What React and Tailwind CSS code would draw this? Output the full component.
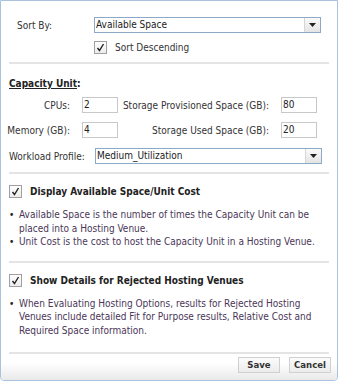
import React from 'react';

const Check = () => (
  <span className="flex h-[13px] w-[13px] shrink-0 items-center justify-center border border-[#a0a0a0] bg-gradient-to-b from-white to-[#ececec]">
    <svg width="9" height="9" viewBox="0 0 9 9">
      <path d="M1.5 5 L3.5 7.5 L7.5 1" fill="none" stroke="#222" strokeWidth="1.4" />
    </svg>
  </span>
);

const Select = ({ value, className }) => (
  <div className={`flex h-[16px] items-stretch border border-[#8ea9c8] bg-white ${className}`}>
    <span className="flex-1 pl-[1px] leading-[14px] text-[#222]">{value}</span>
    <span className="flex w-[16px] items-center justify-center border-l border-[#d6d6d6] bg-gradient-to-b from-[#fafafa] to-[#e4e4e4]">
      <svg width="7" height="4" viewBox="0 0 7 4">
        <path d="M0 0 H7 L3.5 4 Z" fill="#222" />
      </svg>
    </span>
  </div>
);

const Input = ({ value }) => (
  <div className="h-[16px] w-[36px] shrink-0 border border-[#c8c8c8] bg-white pl-[1px] leading-[14px] text-[#222]">
    {value}
  </div>
);

const Sep = ({ className }) => <div className={`mx-[8px] h-[2px] bg-[#e4e4e4] ${className}`} />;

const Bullet = ({ children, className }) => (
  <div className={`flex pl-[8px] pr-[8px] leading-[13.5px] text-[#4a3658] ${className}`}>
    <span className="w-[10px] shrink-0 text-[#222]">•</span>
    <span>{children}</span>
  </div>
);

export default function App() {
  return (
    <div
      className="h-[382px] w-[340px] bg-white text-[10px] text-[#333]"
      style={{ fontFamily: '"DejaVu Sans Condensed", "DejaVu Sans", sans-serif' }}
    >
      <div className="flex h-[381px] w-[338px] flex-col rounded-b-[4px] border border-[#a9c3df]">
        <div className="mt-[16px] flex h-[16px] items-center">
          <span className="w-[93px] pl-[16px]">Sort By:</span>
          <Select value="Available Space" className="w-[227px]" />
        </div>
        <div className="ml-[93px] mt-[8px] flex h-[13px] items-center gap-[8px]">
          <Check />
          <span>Sort Descending</span>
        </div>
        <Sep className="mt-[8px]" />

        <div className="mt-[13px] pl-[8px] leading-[13px] font-bold text-[#222]">
          <span className="underline">Capacity Unit</span>:
        </div>
        <div className="mt-[7px] flex h-[16px] items-center whitespace-nowrap">
          <span className="w-[69px] text-right">CPUs:</span>
          <span className="w-[12px]" />
          <Input value="2" />
          <span className="w-[151px] text-right">Storage Provisioned Space (GB):</span>
          <span className="w-[12px]" />
          <Input value="80" />
        </div>
        <div className="mt-[9px] flex h-[16px] items-center whitespace-nowrap">
          <span className="w-[69px] text-right">Memory (GB):</span>
          <span className="w-[12px]" />
          <Input value="4" />
          <span className="w-[151px] text-right">Storage Used Space (GB):</span>
          <span className="w-[12px]" />
          <Input value="20" />
        </div>
        <div className="mt-[10px] flex h-[16px] items-center whitespace-nowrap">
          <span className="w-[94px] pl-[8px]">Workload Profile:</span>
          <Select value="Medium_Utilization" className="w-[227px]" />
        </div>
        <Sep className="mt-[8px]" />

        <div className="ml-[8px] mt-[11px] flex h-[13px] items-center gap-[8px]">
          <Check />
          <span className="font-bold text-[#222]">Display Available Space/Unit Cost</span>
        </div>
        <Bullet className="mt-[10px]">
          Available Space is the number of times the Capacity Unit can be placed into a Hosting Venue.
        </Bullet>
        <Bullet>Unit Cost is the cost to host the Capacity Unit in a Hosting Venue.</Bullet>
        <Sep className="mt-[12px]" />

        <div className="ml-[8px] mt-[11px] flex h-[13px] items-center gap-[8px]">
          <Check />
          <span className="font-bold text-[#222]">Show Details for Rejected Hosting Venues</span>
        </div>
        <Bullet className="mt-[10px]">
          When Evaluating Hosting Options, results for Rejected Hosting Venues include detailed Fit for Purpose
          results, Relative Cost and Required Space information.
        </Bullet>

        <div className="mt-auto flex flex-col rounded-b-[4px] bg-gradient-to-b from-white from-40% to-[#e9e9e9]">
          <Sep className="" />
          <div className="flex justify-end gap-[9px] pb-[7px] pr-[6px] pt-[3px]">
            <button className="h-[16px] w-[42px] border border-[#d0d0d0] bg-gradient-to-b from-[#fbfbfb] to-[#ececec] text-[9.5px] font-bold text-[#333]">
              Save
            </button>
            <button className="h-[16px] w-[42px] border border-[#d0d0d0] bg-gradient-to-b from-[#fbfbfb] to-[#ececec] text-[9.5px] font-bold text-[#333]">
              Cancel
            </button>
          </div>
        </div>
      </div>
    </div>
  );
}
